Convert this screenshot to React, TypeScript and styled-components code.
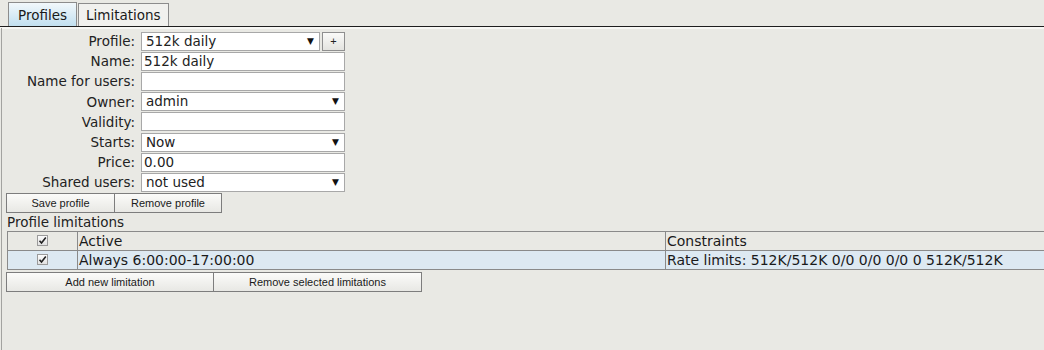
import { Fragment } from 'react'
import { createGlobalStyle, styled } from 'styled-components'

const GlobalStyle = createGlobalStyle`
  html, body {
    margin: 0;
    padding: 0;
    background: #e9e9e4;
    font-family: "DejaVu Sans", Verdana, sans-serif;
    font-size: 13.5px;
    color: #222;
  }
`

const Page = styled.div`
  display: flex;
  flex-direction: column;
  height: 350px;
`

const TabBar = styled.div`
  display: flex;
  align-items: flex-end;
  height: 26px;
  padding-left: 8px;
  border-bottom: 1px solid #1e1e1e;
  box-shadow: 0 2px 0 #f7f7f4;
`

const Tab = styled.div<{ $active?: boolean }>`
  box-sizing: border-box;
  height: ${({ $active }) => ($active ? '24px' : '23px')};
  padding: 0 ${({ $active }) => ($active ? '9px' : '7px')};
  margin-right: 1px;
  border: 1px solid #8c8c8c;
  border-bottom: none;
  display: flex;
  align-items: center;
  font-size: 13.5px;
  color: #1a1a1a;
  background: ${({ $active }) =>
    $active ? 'linear-gradient(#f2f8fb, #c2e0f0)' : '#f1f1ee'};
`

const Panel = styled.div`
  flex: 1;
  margin-top: 1px;
  margin-left: 1px;
  border-left: 1px solid #a3a3a0;
  padding: 3px 0 0 5px;
  display: flex;
  flex-direction: column;
`

const Form = styled.div`
  display: grid;
  grid-template-columns: 128px 204px;
  grid-auto-rows: 20.2px;
  column-gap: 6px;
  align-items: center;
`

const Label = styled.div`
  text-align: right;
  white-space: nowrap;
  color: #222;
`

const FieldRow = styled.div`
  display: flex;
  gap: 2px;
  height: 19px;
`

const TextBox = styled.div`
  box-sizing: border-box;
  flex: 1;
  height: 19px;
  background: #fff;
  border: 1px solid #a8a8a8;
  padding: 0 2px;
  line-height: 17px;
  white-space: nowrap;
`

const SelectBox = styled(TextBox)`
  display: flex;
  justify-content: space-between;
  align-items: center;
  padding-left: 4px;
  padding-right: 5px;
`

const Arrow = styled.span`
  font-size: 9px;
  color: #111;
`

const PlusButton = styled.div`
  box-sizing: border-box;
  width: 23px;
  height: 19px;
  border: 1px solid #8f8f8f;
  background: linear-gradient(#fafaf8, #e4e4e0);
  display: flex;
  align-items: center;
  justify-content: center;
  font-family: "Liberation Sans", Arial, sans-serif;
  font-size: 11px;
`

const ButtonRow = styled.div<{ $top?: number }>`
  display: flex;
  margin-left: -1px;
  margin-top: ${({ $top }) => $top ?? 0}px;
`

const Button = styled.div<{ $width: number }>`
  box-sizing: border-box;
  width: ${({ $width }) => $width}px;
  height: 20px;
  border: 1px solid #7d7d7d;
  background: linear-gradient(#fbfbf9, #e8e8e4);
  display: flex;
  align-items: center;
  justify-content: center;
  font-family: "Liberation Sans", Arial, sans-serif;
  font-size: 11px;
  color: #1a1a1a;
  margin-right: -1px;
`

const SectionTitle = styled.div`
  margin-top: 1px;
  height: 16px;
  line-height: 16px;
`

const Table = styled.div`
  margin-top: 1px;
  border-top: 1px solid #8a8a8a;
  border-left: 1px solid #8a8a8a;
  font-size: 14px;
`

const Row = styled.div<{ $selected?: boolean }>`
  display: grid;
  grid-template-columns: 70px 588px 1fr;
  height: 18px;
  border-bottom: 1px solid #8a8a8a;
  background: ${({ $selected }) => ($selected ? '#dde9f2' : 'transparent')};
`

const Cell = styled.div<{ $center?: boolean }>`
  display: flex;
  align-items: center;
  justify-content: ${({ $center }) => ($center ? 'center' : 'flex-start')};
  padding-left: ${({ $center }) => ($center ? '0' : '1px')};
  border-right: 1px solid #8a8a8a;
  white-space: nowrap;
  color: #1a1a1a;
  &:last-child {
    border-right: none;
  }
`

const CheckBox = styled.span`
  box-sizing: border-box;
  width: 11px;
  height: 11px;
  border: 1px solid #9a9a9a;
  background: linear-gradient(#fbfbfb, #e2e2e2);
  display: flex;
  align-items: center;
  justify-content: center;
`

const Check = () => (
  <CheckBox>
    <svg width="9" height="9" viewBox="0 0 9 9">
      <path d="M1.5 4.8 L3.5 7 L7.8 1.5" fill="none" stroke="#222" strokeWidth="1.6" />
    </svg>
  </CheckBox>
)

const fields: { label: string; kind: 'text' | 'select' | 'profile'; value: string }[] = [
  { label: 'Profile:', kind: 'profile', value: '512k daily' },
  { label: 'Name:', kind: 'text', value: '512k daily' },
  { label: 'Name for users:', kind: 'text', value: '' },
  { label: 'Owner:', kind: 'select', value: 'admin' },
  { label: 'Validity:', kind: 'text', value: '' },
  { label: 'Starts:', kind: 'select', value: 'Now' },
  { label: 'Price:', kind: 'text', value: '0.00' },
  { label: 'Shared users:', kind: 'select', value: 'not used' },
]

export default function App() {
  return (
    <Page>
      <GlobalStyle />
      <TabBar>
        <Tab $active>Profiles</Tab>
        <Tab>Limitations</Tab>
      </TabBar>
      <Panel>
        <Form>
          {fields.map((f) => (
            <Fragment key={f.label}>
              <Label>{f.label}</Label>
              <FieldRow>
                {f.kind === 'text' ? (
                  <TextBox>{f.value}</TextBox>
                ) : (
                  <SelectBox>
                    <span>{f.value}</span>
                    <Arrow>▼</Arrow>
                  </SelectBox>
                )}
                {f.kind === 'profile' && <PlusButton>+</PlusButton>}
              </FieldRow>
            </Fragment>
          ))}
        </Form>
        <ButtonRow>
          <Button $width={109}>Save profile</Button>
          <Button $width={108}>Remove profile</Button>
        </ButtonRow>
        <SectionTitle>Profile limitations</SectionTitle>
        <Table>
          <Row>
            <Cell $center>
              <Check />
            </Cell>
            <Cell>Active</Cell>
            <Cell>Constraints</Cell>
          </Row>
          <Row $selected>
            <Cell $center>
              <Check />
            </Cell>
            <Cell>Always 6:00:00-17:00:00</Cell>
            <Cell>Rate limits: 512K/512K 0/0 0/0 0/0 0 512K/512K</Cell>
          </Row>
        </Table>
        <ButtonRow $top={2}>
          <Button $width={208}>Add new limitation</Button>
          <Button $width={209}>Remove selected limitations</Button>
        </ButtonRow>
      </Panel>
    </Page>
  )
}
